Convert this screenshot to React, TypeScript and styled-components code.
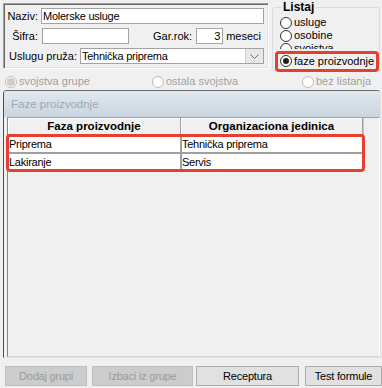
import React from 'react';
import styled, { createGlobalStyle } from 'styled-components';

const Global = createGlobalStyle`
  html, body { margin: 0; padding: 0; background: #f0f0f0; }
  body { font-family: "Liberation Sans", Arial, sans-serif; font-size: 11px; color: #000; }
  #root { width: 382px; height: 388px; }
`;

const Window = styled.div`
  position: relative;
  width: 382px;
  height: 388px;
  overflow: hidden;
  background: #f0f0f0;
  display: flex;
  flex-direction: column;
`;

const TopArea = styled.div`
  display: flex;
  align-items: flex-start;
  height: 72px;
`;

const GroupBox = styled.div`
  margin: 3px 0 0 3px;
  width: 266px;
  height: 66px;
  box-sizing: border-box;
  border-top: 1px solid #a0a0a0;
  border-left: 1px solid #a0a0a0;
  border-right: 1px solid #ffffff;
  border-bottom: 1px solid #ffffff;
  box-shadow: inset 1px 1px 0 #696969, inset -1px -1px 0 #e3e3e3;
  padding: 4px 0 0 1px;
  display: flex;
  flex-direction: column;
`;

const FieldRow = styled.div<{ $mt?: number }>`
  display: flex;
  align-items: center;
  height: 16px;
  margin-top: ${(p) => p.$mt ?? 0}px;
`;

const Label = styled.span<{ $w?: number; $ml?: number }>`
  display: inline-block;
  width: ${(p) => (p.$w ? `${p.$w}px` : 'auto')};
  margin-left: ${(p) => p.$ml ?? 0}px;
  box-sizing: border-box;
  text-align: right;
  font-size: 11px;
  line-height: 16px;
  white-space: nowrap;
`;

const TextBox = styled.div<{ $w: number; $right?: boolean; $ml?: number }>`
  width: ${(p) => p.$w}px;
  height: 16px;
  margin-left: ${(p) => p.$ml ?? 0}px;
  box-sizing: border-box;
  border: 1px solid #a3a3a3;
  background: #ffffff;
  font-size: 11px;
  line-height: 14px;
  letter-spacing: -0.25px;
  padding: 0 2px 0 1px;
  text-align: ${(p) => (p.$right ? 'right' : 'left')};
  white-space: nowrap;
  overflow: hidden;
`;

const Select = styled.div`
  width: 184px;
  height: 16px;
  box-sizing: border-box;
  display: flex;
  border: 1px solid #a3a3a3;
  background: #ffffff;
`;

const SelectText = styled.span`
  flex: 1;
  padding-left: 1px;
  line-height: 14px;
  font-size: 11px;
  letter-spacing: -0.25px;
  white-space: nowrap;
`;

const DropBtn = styled.span`
  width: 18px;
  height: 14px;
  box-sizing: border-box;
  background: #e8e8e8;
  border-left: 1px solid #cfcfcf;
  display: flex;
  align-items: center;
  justify-content: center;
`;

const ListajSet = styled.fieldset`
  margin: 0 0 0 3px;
  padding: 2px 0 0 7px;
  width: 108px;
  height: 71px;
  box-sizing: border-box;
  border: 1px solid #dcdcdc;
  border-radius: 3px;
  min-width: 0;
  display: flex;
  flex-direction: column;
`;

const Legend = styled.legend`
  font-weight: bold;
  font-size: 12px;
  line-height: 14px;
  padding: 0 2px;
  margin-left: 1px;
`;

const RadioRow = styled.div<{ $cover?: boolean }>`
  display: flex;
  align-items: center;
  gap: 2px;
  height: ${(p) => (p.$cover ? 22 : 13)}px;
  box-sizing: border-box;
  padding-top: ${(p) => (p.$cover ? 3 : 0)}px;
  margin-top: ${(p) => (p.$cover ? -6 : 0)}px;
  background: #f0f0f0;
  position: relative;
  white-space: nowrap;
`;

const RadioText = styled.span<{ $disabled?: boolean }>`
  color: ${(p) => (p.$disabled ? '#a0a0a0' : '#000')};
  line-height: 13px;
  font-size: 11px;
`;

const Circle = styled.span<{ $checked?: boolean; $disabled?: boolean }>`
  width: 12px;
  height: 12px;
  flex: 0 0 12px;
  box-sizing: border-box;
  border-radius: 50%;
  border: 1px solid ${(p) => (p.$disabled ? '#bcbcbc' : '#333333')};
  background: #ffffff;
  display: flex;
  align-items: center;
  justify-content: center;
  &::after {
    content: '';
    display: ${(p) => (p.$checked ? 'block' : 'none')};
    width: ${(p) => (p.$disabled ? 8 : 6)}px;
    height: ${(p) => (p.$disabled ? 8 : 6)}px;
    border-radius: 50%;
    background: ${(p) => (p.$disabled ? '#cdcdcd' : '#1f1f1f')};
  }
`;

const OptionRow = styled.div`
  margin-top: 3px;
  height: 13px;
  padding-left: 5px;
  display: grid;
  grid-template-columns: 147px 150px 1fr;
`;

const OptionItem = styled.div`
  display: flex;
  align-items: center;
  gap: 2px;
  white-space: nowrap;
`;

const Panel = styled.div`
  margin: 2px 0 0 3px;
  width: 378px;
  height: 268px;
  box-sizing: border-box;
  border-top: 1px solid #6a6a6a;
  border-left: 1px solid #4e4e4e;
  border-right: 1px solid #e2e2e2;
  border-bottom: 1px solid #e2e2e2;
  border-radius: 4px 4px 0 0;
  display: flex;
  flex-direction: column;
`;

const PanelHeader = styled.div`
  height: 26px;
  padding-left: 7px;
  background: linear-gradient(#e1e8ef, #c9d5e1);
  border-radius: 3px 3px 0 0;
  color: #9ea8b2;
  font-size: 11.5px;
  line-height: 26px;
`;

const GridArea = styled.div`
  margin-left: 3px;
  flex: 1;
  box-sizing: border-box;
  border-left: 1px solid #7d8893;
  border-top: 1px solid #a0a0a0;
  border-right: 1px solid #ffffff;
  border-bottom: 1px solid #d6d6d6;
  background: #f0f0f0;
  display: flex;
  flex-direction: column;
`;

const HeaderRow = styled.div`
  display: flex;
  height: 17px;
`;

const HeaderCell = styled.div<{ $w: number }>`
  width: ${(p) => p.$w}px;
  box-sizing: border-box;
  background: #f0f0f0;
  border-right: 1px solid #a0a0a0;
  border-bottom: 1px solid #a0a0a0;
  box-shadow: inset 1px 1px 0 #ffffff;
  text-align: center;
  font-weight: bold;
  font-size: 11.5px;
  line-height: 16px;
  white-space: nowrap;
`;

const HeaderFiller = styled.div`
  flex: 1;
  border-left: 1px solid #c8c8c8;
`;

const DataRow = styled.div`
  display: flex;
  height: 18px;
`;

const DataCell = styled.div<{ $w: number }>`
  width: ${(p) => p.$w}px;
  box-sizing: border-box;
  background: #ffffff;
  border: 1px solid #a0a0a0;
  font-size: 11px;
  line-height: 16px;
  letter-spacing: -0.25px;
  white-space: nowrap;
  overflow: hidden;
`;

const ButtonBar = styled.div`
  margin-top: 8px;
  display: flex;
  padding-left: 5px;
`;

const Button = styled.button<{ $w: number; $ml?: number }>`
  width: ${(p) => p.$w}px;
  height: 20px;
  margin: 0 0 0 ${(p) => p.$ml ?? 0}px;
  padding: 0;
  box-sizing: border-box;
  font-family: "Liberation Sans", Arial, sans-serif;
  font-size: 11px;
  letter-spacing: -0.2px;
  background: #e1e1e1;
  border: 1px solid #adadad;
  color: #000;
  white-space: nowrap;
  &:disabled {
    background: #cccccc;
    border-color: #bfbfbf;
    color: #9b9b9b;
  }
`;

const Highlight = styled.div`
  position: absolute;
  box-sizing: border-box;
  border: 3px solid #e5402f;
  border-radius: 4px;
  pointer-events: none;
`;

const Chevron = () => (
  <svg width="9" height="5" viewBox="0 0 9 5">
    <polyline points="0.5,0.5 4.5,4.5 8.5,0.5" fill="none" stroke="#6b6b6b" strokeWidth="1" />
  </svg>
);

const rows = [
  { faza: 'Priprema', org: 'Tehnička priprema' },
  { faza: 'Lakiranje', org: 'Servis' },
];

export default function App() {
  return (
    <Window>
      <Global />
      <TopArea>
        <GroupBox>
          <FieldRow>
            <Label $w={36}>Naziv:&nbsp;</Label>
            <TextBox $w={223}>Molerske usluge</TextBox>
          </FieldRow>
          <FieldRow $mt={4}>
            <Label $w={36}>Šifra:&nbsp;</Label>
            <TextBox $w={87} $ml={1}>{''}</TextBox>
            <Label $ml={24}>Gar.rok:</Label>
            <TextBox $w={27} $ml={4} $right>3</TextBox>
            <Label $ml={3}>meseci</Label>
          </FieldRow>
          <FieldRow $mt={4}>
            <Label $w={75}>Uslugu pruža:&nbsp;</Label>
            <Select>
              <SelectText>Tehnička priprema</SelectText>
              <DropBtn>
                <Chevron />
              </DropBtn>
            </Select>
          </FieldRow>
        </GroupBox>
        <ListajSet>
          <Legend>Listaj</Legend>
          <RadioRow>
            <Circle />
            <RadioText>usluge</RadioText>
          </RadioRow>
          <RadioRow>
            <Circle />
            <RadioText>osobine</RadioText>
          </RadioRow>
          <RadioRow>
            <Circle />
            <RadioText>svojstva</RadioText>
          </RadioRow>
          <RadioRow $cover>
            <Circle $checked />
            <RadioText>faze proizvodnje</RadioText>
          </RadioRow>
        </ListajSet>
      </TopArea>
      <OptionRow>
        <OptionItem>
          <Circle $checked $disabled />
          <RadioText $disabled>svojstva grupe</RadioText>
        </OptionItem>
        <OptionItem>
          <Circle $disabled />
          <RadioText $disabled>ostala svojstva</RadioText>
        </OptionItem>
        <OptionItem>
          <Circle $disabled />
          <RadioText $disabled>bez listanja</RadioText>
        </OptionItem>
      </OptionRow>
      <Panel>
        <PanelHeader>Faze proizvodnje</PanelHeader>
        <GridArea>
          <HeaderRow>
            <HeaderCell $w={173}>Faza proizvodnje</HeaderCell>
            <HeaderCell $w={182}>Organizaciona jedinica</HeaderCell>
            <HeaderFiller />
          </HeaderRow>
          {rows.map((r) => (
            <DataRow key={r.faza}>
              <DataCell $w={173}>{r.faza}</DataCell>
              <DataCell $w={182}>{r.org}</DataCell>
            </DataRow>
          ))}
        </GridArea>
      </Panel>
      <ButtonBar>
        <Button $w={82} disabled>Dodaj grupi</Button>
        <Button $w={101} $ml={5} disabled>Izbaci iz grupe</Button>
        <Button $w={103} $ml={3}>Receptura</Button>
        <Button $w={77} $ml={6}>Test formule</Button>
      </ButtonBar>
      <Highlight style={{ left: 275, top: 51, width: 104, height: 21 }} />
      <Highlight style={{ left: 6, top: 134, width: 359, height: 38 }} />
    </Window>
  );
}
